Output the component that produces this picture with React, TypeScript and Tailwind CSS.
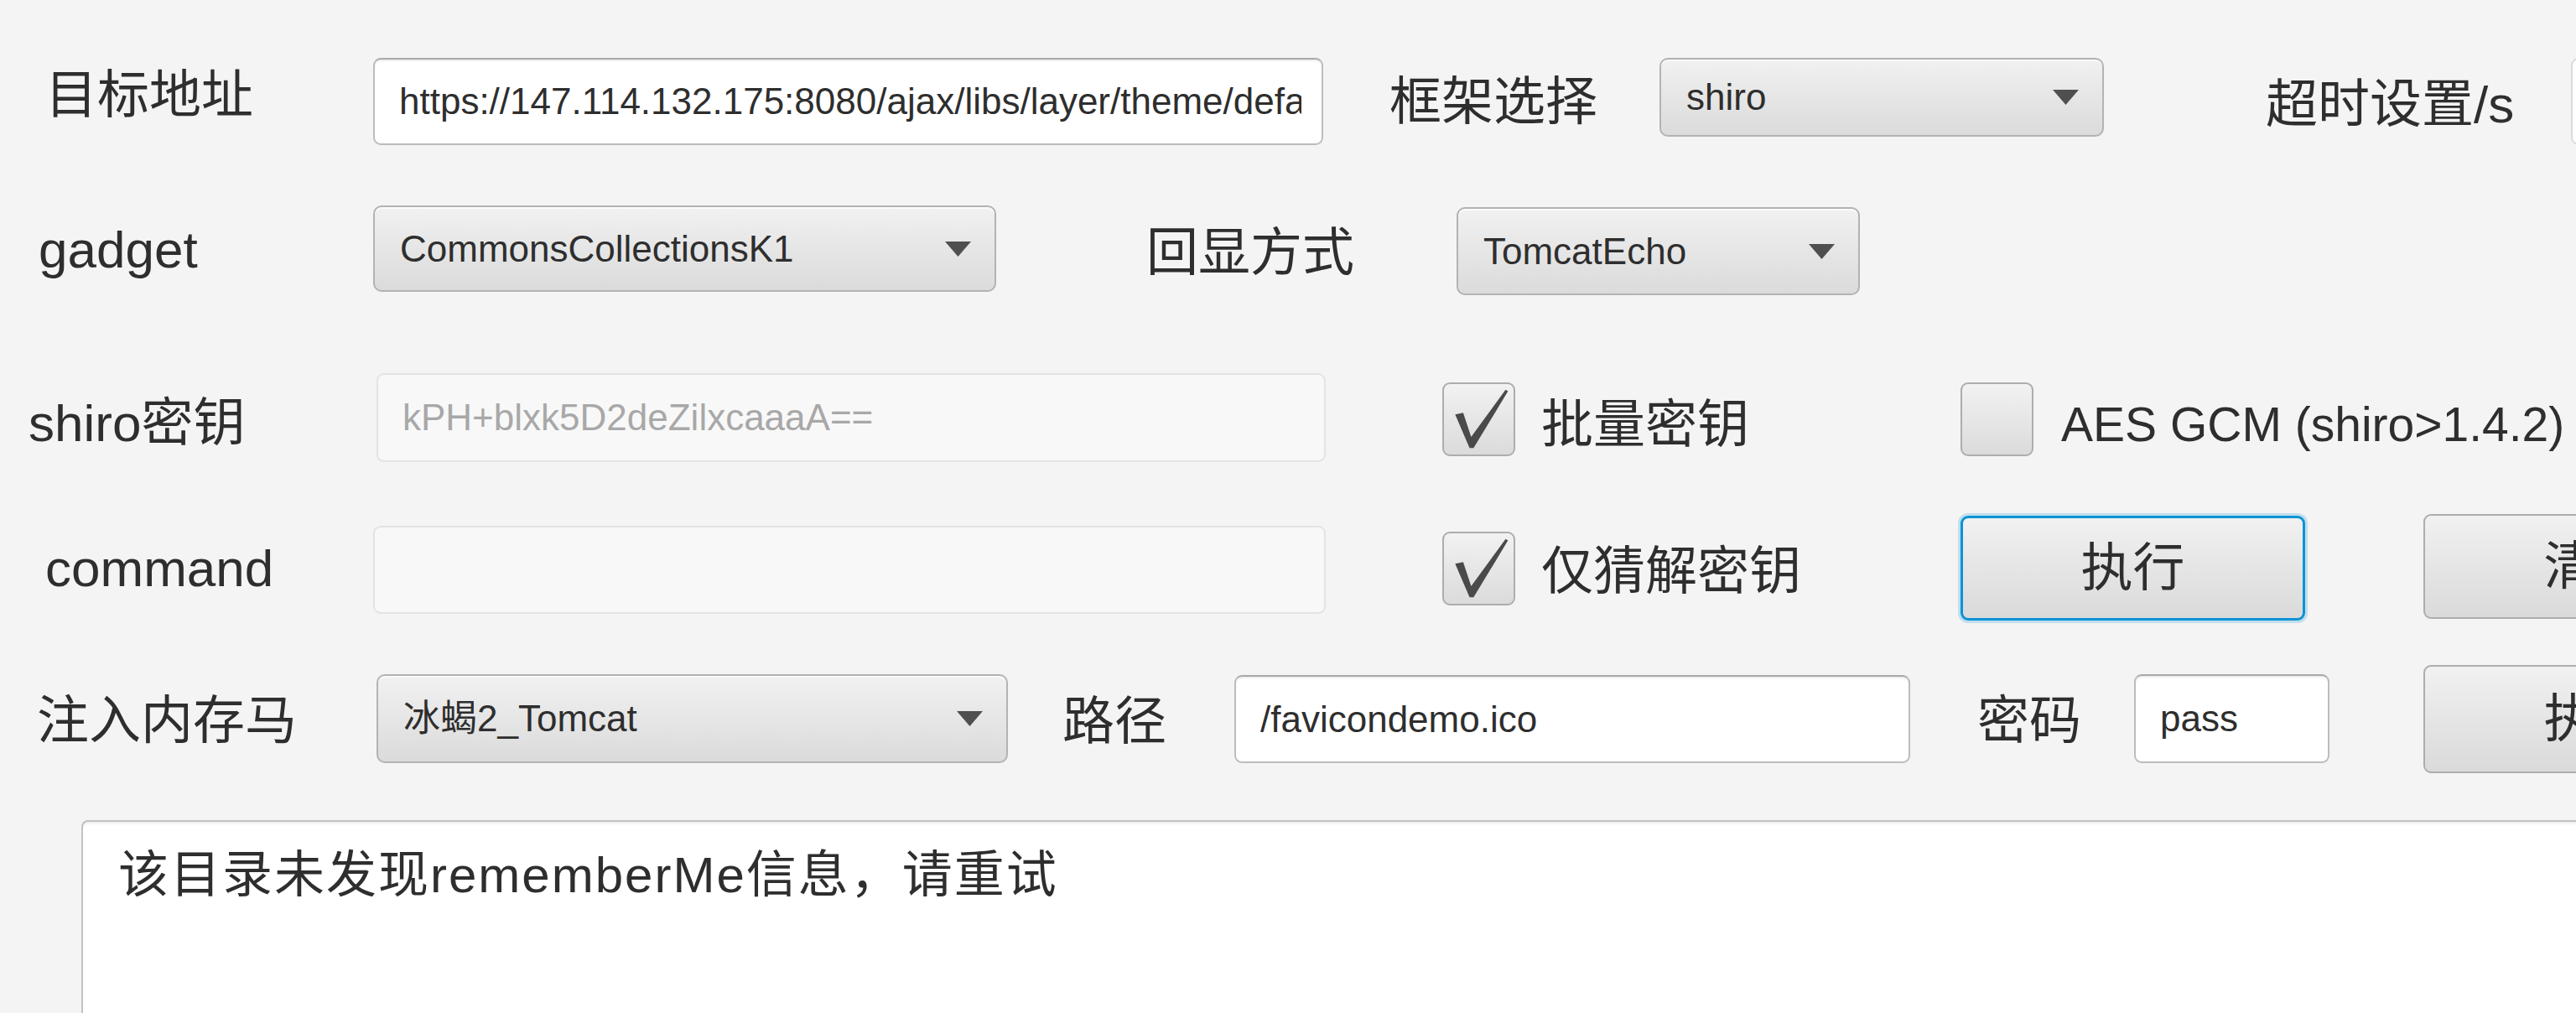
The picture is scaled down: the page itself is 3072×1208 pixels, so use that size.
import React from 'react';

const Label = ({ text, className = '', size = 'text-[62px]' }) => (
  <div className={`shrink-0 whitespace-nowrap leading-[62px] text-[#2e2e2e] ${size} ${className}`}>{text}</div>
);

const Arrow = () => (
  <svg width="31" height="18" viewBox="0 0 31 18" className="shrink-0">
    <polygon points="0,0 31,0 15.5,18" fill="#4f4f4f" />
  </svg>
);

const Select = ({ value, className = '' }) => (
  <div
    className={`shrink-0 flex items-center justify-between pl-[30px] pr-[28px] rounded-[10px] border-2 border-[#b3b3b3] bg-linear-to-b from-[#f1f1f1] to-[#dbdbdb] shadow-[inset_0_2px_0_#fafafa] ${className}`}
  >
    <span className="text-[44px] leading-none text-[#2e2e2e] whitespace-nowrap">{value}</span>
    <Arrow />
  </div>
);

const Field = ({ value, disabled = false, className = '' }) => (
  <input
    readOnly
    value={value}
    className={`shrink-0 pl-[29px] pr-[24px] rounded-[9px] border-2 text-[44px] leading-none outline-none ${
      disabled
        ? 'bg-[#f8f8f8] border-[#e3e3e3] text-[#a8a8a8]'
        : 'bg-white border-[#bcbcbc] border-t-[#a9a9a9] text-[#2e2e2e] shadow-[inset_0_3px_3px_-2px_rgba(0,0,0,0.12)]'
    } ${className}`}
  />
);

const Check = ({ checked, className = '' }) => (
  <div
    className={`shrink-0 w-[87px] h-[88px] rounded-[9px] border-2 border-[#adadad] bg-linear-to-b from-[#f2f2f2] to-[#dbdbdb] ${className}`}
  >
    {checked && (
      <svg width="83" height="84" viewBox="0 0 87 88" className="block">
        <path d="M14 38 L24 36 L34 66 L77 7 L80 9 L37 80 L32 80 Z" fill="#4a4a4a" />
      </svg>
    )}
  </div>
);

const Button = ({ text, focused = false, className = '' }) => (
  <div
    className={`shrink-0 w-[411px] flex items-center justify-center rounded-[9px] bg-linear-to-b from-[#f1f1f1] to-[#dadada] text-[62px] leading-none text-[#2e2e2e] ${
      focused
        ? 'border-[3px] border-[#0b93d5] shadow-[0_0_0_3px_rgba(11,147,213,0.22)]'
        : 'border-2 border-[#adadad]'
    } ${className}`}
  >
    {text}
  </div>
);

export default function App() {
  return (
    <div className="w-[3072px] h-[1208px] overflow-hidden bg-[#f4f4f4] font-['Liberation_Sans','Noto_Sans_CJK_SC',sans-serif] flex flex-col">
      {/* row 1 */}
      <div className="flex items-start h-[104px] mt-[69px]">
        <Label text="目标地址" className="ml-[54px] w-[391px] mt-[14px]" />
        <Field value="https://147.114.132.175:8080/ajax/libs/layer/theme/default/icon.png" className="w-[1133px] h-[104px]" />
        <Label text="框架选择" className="ml-[79px] w-[322px] mt-[22px]" />
        <Select value="shiro" className="w-[530px] h-[94px]" />
        <Label text="超时设置/s" className="ml-[193px] w-[364px] mt-[25px]" />
        <div className="shrink-0 w-[300px] h-[104px] bg-white border-2 border-[#dadada] rounded-[9px]" />
      </div>

      {/* row 2 */}
      <div className="flex items-start h-[107px] mt-[72px]">
        <Label text="gadget" className="ml-[46px] w-[399px] mt-[22px]" />
        <Select value="CommonsCollectionsK1" className="w-[743px] h-[103px]" />
        <Label text="回显方式" className="ml-[179px] w-[370px] mt-[26px]" />
        <Select value="TomcatEcho" className="w-[481px] h-[105px] mt-[2px]" />
      </div>

      {/* row 3 */}
      <div className="flex items-start h-[106px] mt-[93px]">
        <Label text="shiro密钥" className="ml-[34px] w-[415px] mt-[29px]" />
        <Field value="kPH+blxk5D2deZilxcaaaA==" disabled className="w-[1132px] h-[106px]" />
        <Check checked className="ml-[139px] mt-[11px]" />
        <Label text="批量密钥" className="ml-[31px] w-[500px] mt-[31px]" />
        <Check checked={false} className="mt-[11px]" />
        <Label text="AES GCM (shiro>1.4.2)" size="text-[57px]" className="ml-[33px] mt-[30px]" />
      </div>

      {/* row 4 */}
      <div className="flex items-start h-[127px] mt-[62px]">
        <Label text="command" className="ml-[54px] w-[391px] mt-[34px]" />
        <Field value="" disabled className="w-[1136px] h-[105px] mt-[14px]" />
        <Check checked className="ml-[139px] mt-[21px]" />
        <Label text="仅猜解密钥" className="ml-[31px] w-[500px] mt-[38px]" />
        <Button text="执行" focused className="h-[125px] mt-[2px]" />
        <Button text="清除" className="ml-[141px] h-[125px]" />
      </div>

      {/* row 5 */}
      <div className="flex items-start h-[129px] mt-[53px]">
        <Label text="注入内存马" className="ml-[44px] w-[405px] mt-[36px]" />
        <Select value="冰蝎2_Tomcat" className="w-[753px] h-[106px] mt-[11px]" />
        <Label text="路径" className="ml-[65px] w-[205px] mt-[37px]" />
        <Field value="/favicondemo.ico" className="w-[806px] h-[105px] mt-[12px]" />
        <Label text="密码" className="ml-[80px] w-[187px] mt-[36px]" />
        <Field value="pass" className="w-[233px] h-[106px] mt-[11px]" />
        <Button text="执行" className="ml-[112px] h-[129px]" />
      </div>

      {/* output */}
      <div className="shrink-0 ml-[97px] mt-[56px] w-[3100px] h-[400px] bg-white border-t-2 border-l-2 border-[#c2c2c2] rounded-tl-[8px] shadow-[inset_0_4px_4px_-3px_rgba(0,0,0,0.12)] pl-[42px] pt-[34px]">
        <div className="text-[60px] leading-[60px] tracking-[2px] text-[#2e2e2e] whitespace-nowrap">
          该目录未发现rememberMe信息，请重试
        </div>
      </div>
    </div>
  );
}
